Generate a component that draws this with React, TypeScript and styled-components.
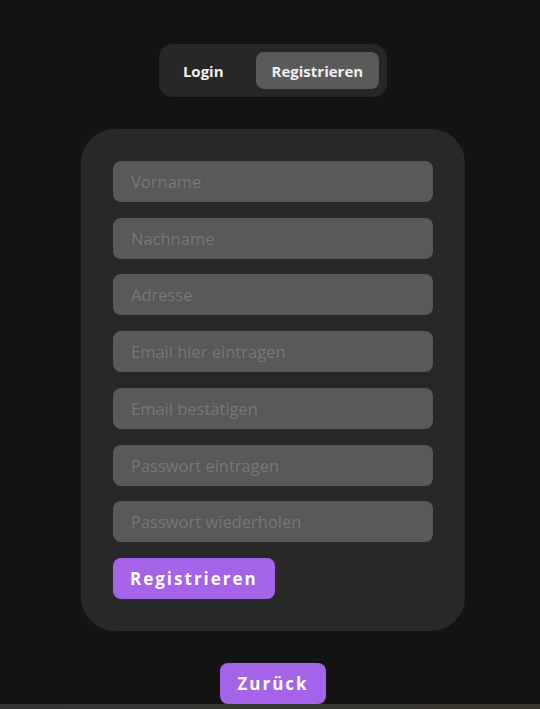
import { useState } from 'react';
import styled, { createGlobalStyle } from 'styled-components';

const GlobalStyle = createGlobalStyle`
  html, body {
    margin: 0;
    padding: 0;
    background: #141414;
  }
  body {
    font-family: "Open Sans", "Noto Sans", sans-serif;
  }
`;

const fields = [
  'Vorname',
  'Nachname',
  'Adresse',
  'Email hier eintragen',
  'Email bestätigen',
  'Passwort eintragen',
  'Passwort wiederholen',
];

const App = () => {
  const [tab, setTab] = useState<'login' | 'register'>('register');

  return (
    <>
      <GlobalStyle />
      <Page>
        <TabBar>
          <Tab $active={tab === 'login'} onClick={() => setTab('login')}>
            Login
          </Tab>
          <Tab $active={tab === 'register'} onClick={() => setTab('register')}>
            Registrieren
          </Tab>
        </TabBar>
        <Card>
          {fields.map((f) => (
            <Input key={f} placeholder={f} type="text" />
          ))}
          <ActionButton type="button">Registrieren</ActionButton>
        </Card>
        <ActionButton type="button">Zurück</ActionButton>
      </Page>
      <BottomStrip />
    </>
  );
};

export default App;

const Page = styled.div`
  display: flex;
  flex-direction: column;
  align-items: center;
  gap: 32px;
  padding: 44px 0 0 6px;
`;

const TabBar = styled.div`
  display: flex;
  gap: 16px;
  padding: 8px;
  background: #272727;
  border-radius: 14px;
`;

const Tab = styled.button<{ $active?: boolean }>`
  border: none;
  cursor: pointer;
  height: 37px;
  padding: 0 16px;
  border-radius: 8px;
  font-family: "Open Sans", "Noto Sans", sans-serif;
  font-weight: 700;
  font-size: 15px;
  color: #f0f0f0;
  background: ${(p) => (p.$active ? '#5a5a5a' : 'transparent')};
`;

const Card = styled.form`
  display: flex;
  flex-direction: column;
  align-items: flex-start;
  gap: 15.72px;
  width: 320px;
  padding: 32px;
  background: #282828;
  border-radius: 34px;
`;

const Input = styled.input`
  width: 100%;
  height: 41px;
  box-sizing: border-box;
  border: none;
  outline: none;
  border-radius: 8px;
  padding: 0 18px;
  background: #595959;
  color: #e0e0e0;
  font-family: "Open Sans", "Noto Sans", sans-serif;
  font-size: 16.5px;
  &::placeholder {
    color: #787878;
  }
`;

const ActionButton = styled.button`
  border: none;
  cursor: pointer;
  height: 41px;
  padding: 0 17px;
  border-radius: 8px;
  background: #a463e8;
  color: #ffffff;
  font-family: "Open Sans", "Noto Sans", sans-serif;
  font-weight: 700;
  font-size: 17px;
  letter-spacing: 2px;
`;

const BottomStrip = styled.div`
  height: 5px;
  background: linear-gradient(90deg, #353535, #3a372f);
`;
